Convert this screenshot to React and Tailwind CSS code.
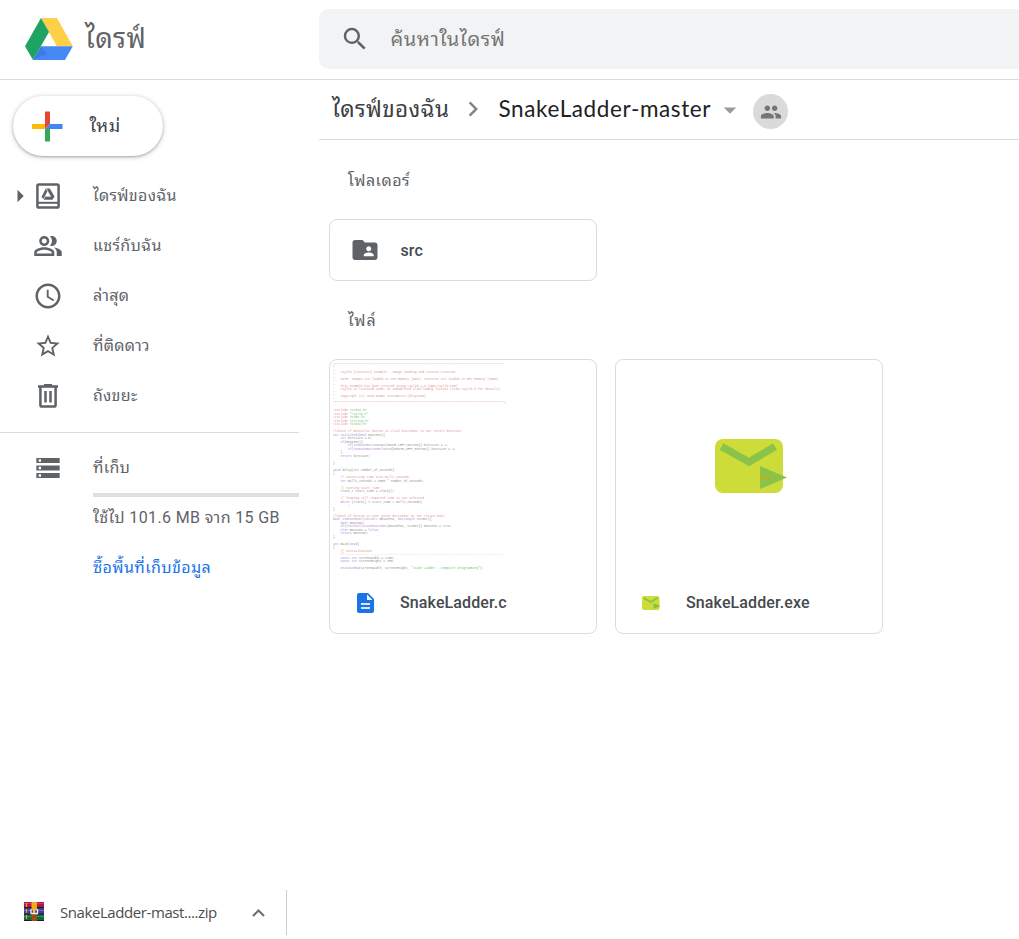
import React from "react";
import {
  MdSearch, MdChevronRight, MdArrowDropDown, MdPeople, MdOutlinePeopleAlt,
  MdAccessTime, MdStarBorder, MdStorage, MdFolderShared, MdArrowRight,
} from "react-icons/md";

const STARS = "*".repeat(91);
const R = "text-[#cf6f6f]", G = "text-[#3fae49]", B = "text-[#6a6ad8]", K = "text-[#666]", P = "text-[#9a5fb0]";

const CODE = [
  [[R, "/" + STARS]],
  [[R, "*"]],
  [[R, "*   raylib [textures] example - Image loading and texture creation"]],
  [[R, "*"]],
  [[R, "*   NOTE: Images are loaded in CPU memory (RAM); textures are loaded in GPU memory (VRAM)"]],
  [[R, "*"]],
  [[R, "*   This example has been created using raylib 1.3 (www.raylib.com)"]],
  [[R, "*   raylib is licensed under an unmodified zlib/libpng license (View raylib.h for details)"]],
  [[R, "*"]],
  [[R, "*   Copyright (c) 2015 Ramon Santamaria (@raysan5)"]],
  [[R, "*"]],
  [[R, STARS + "*/"]],
  [],
  [[R, "#include "], [G, "<stdio.h>"]],
  [[R, "#include "], [G, '"raylib.h"']],
  [[R, "#include "], [G, "<time.h>"]],
  [[R, "#include "], [G, "<string.h>"]],
  [[R, "#include "], [G, "<stdio.h>"]],
  [],
  [[R, "//Check if mouseclic button is click buttonbar is not return btnState"]],
  [[B, "int "], [P, "IsClicked("], [B, "bool "], [K, "mouseOn){"]],
  [[B, "    int "], [K, "btnState = 0;"]],
  [[B, "    if"], [K, "(mouseOn){"]],
  [[B, "        if("], [P, "IsMouseButtonDown"], [K, "(MOUSE_LEFT_BUTTON)) btnState = 1;"]],
  [[B, "        if("], [P, "IsMouseButtonReleased"], [K, "(MOUSE_LEFT_BUTTON)) btnState = 2;"]],
  [[K, "    }"]],
  [[B, "    return "], [K, "btnState;"]],
  [],
  [[K, "}"]],
  [],
  [[B, "void "], [K, "delay("], [B, "int "], [K, "number_of_seconds)"]],
  [[K, "{"]],
  [[R, "    // Converting time into milli_seconds"]],
  [[B, "    int "], [K, "milli_seconds = 1000 * number_of_seconds;"]],
  [],
  [[R, "    // Storing start time"]],
  [[K, "    clock_t start_time = clock();"]],
  [],
  [[R, "    // looping till required time is not achieved"]],
  [[B, "    while "], [K, "(clock() < start_time + milli_seconds)"]],
  [[K, "        ;"]],
  [[K, "}"]],
  [],
  [[R, "//Check if button is over given buttonbar or not return bool"]],
  [[B, "bool "], [P, "IsMouseOver(Vector2 "], [K, "mousePos, "], [P, "Rectangle "], [K, "srcRec){"]],
  [[B, "    bool "], [K, "mouseOn;"]],
  [[B, "    if"], [P, "(CheckCollisionPointRec"], [K, "(mousePos, srcRec)) mouseOn = "], [B, "true;"]],
  [[B, "    else "], [K, "mouseOn = "], [B, "false;"]],
  [[B, "    return "], [K, "mouseOn;"]],
  [[K, "}"]],
  [],
  [[B, "int "], [K, "main("], [B, "void"], [K, ")"]],
  [[K, "{"]],
  [[R, "    // Initialization"]],
  [[R, "    //" + "-".repeat(86)]],
  [[B, "    const int "], [K, "screenWidth = 1250;"]],
  [[B, "    const int "], [K, "screenHeight = 700;"]],
  [],
  [[P, "    InitWindow"], [K, "(screenWidth, screenHeight, "], [G, '"Snake Ladder - Computer programming"'], [K, ");"]],
];

function DriveLogo() {
  return (
    <svg className="h-[42px] w-[48px]" viewBox="0 0 48 42">
      <path d="M16 0h16l15.8 28.2h-16z" fill="#ffcf48" />
      <path d="M16 0l8 14L8 42 0 28.2z" fill="#1da362" />
      <path d="M8 42l8-13.8h31.8L40 42z" fill="#4688f4" />
      <path d="M8 42l8-13.8 6 7.5z" fill="#3b6fd9" opacity=".6" />
    </svg>
  );
}

function PlusIcon() {
  return (
    <svg className="size-[31px]" viewBox="0 0 31 31">
      <path d="M13 .5h5V13l-5 5z" fill="#ea4335" />
      <path d="M0 13h13v5H0z" fill="#fbbc04" />
      <path d="M13 18h5v12.500h-5z" fill="#34a853" />
      <path d="M18 13h12.500v5H13z" fill="#4285f4" />
    </svg>
  );
}

function MyDriveIcon() {
  return (
    <svg className="h-[26px] w-[24px]" viewBox="0 0 24 26" fill="none">
      <rect x="1.4" y="1.4" width="21.2" height="23.2" rx="1.6" stroke="#5f6368" strokeWidth="2.5" />
      <path d="M2 19.8h20" stroke="#5f6368" strokeWidth="2" />
      <path d="M9.8 5.5h4l4.7 8-2 3.3H8.2L5.5 14z" fill="#5f6368" />
      <path d="M11.4 8.3l2.8 4.8H9.1z" fill="#fff" />
      <path d="M10 5.3l4.6 8.1H9L7.3 17" stroke="#fff" strokeWidth=".7" />
    </svg>
  );
}

function TrashIcon() {
  return (
    <svg className="h-[24px] w-[20px]" viewBox="0 0 20 24" fill="none" stroke="#5f6368">
      <path d="M0 2.5h20" strokeWidth="2.6" />
      <path d="M6 1h8" strokeWidth="2" />
      <path d="M2.4 3v18q0 1.6 1.6 1.6h12q1.6 0 1.6-1.6V3" strokeWidth="2.5" />
      <path d="M7.5 7v11.5M12.5 7v11.5" strokeWidth="2.5" />
    </svg>
  );
}

function NavRow({ icon, label, arrow }) {
  return (
    <div className="flex h-[50px] items-center">
      <div className="flex w-[33px] justify-end">
        {arrow && <MdArrowRight className="mr-[-2px] size-[30px] shrink-0 text-[#5f6368]" />}
      </div>
      <div className="flex w-[30px] justify-center text-[#5f6368]">{icon}</div>
      <span className="ml-[30px] whitespace-nowrap text-[16px] leading-[24px] tracking-[0.3px] text-[#5f6368]">{label}</span>
    </div>
  );
}

function MailIcon({ className }) {
  return (
    <svg className={className} viewBox="0 0 72 54">
      <rect width="68" height="54" rx="8" fill="#cddc39" />
      <path d="M6.5 7.5L34 23 60 7.5" fill="none" stroke="#8bc34a" strokeWidth="7.5" />
      <path d="M45 27l27 11.5L45 50z" fill="#8bc34a" />
      <path d="M45 36l16 2.5L45 41z" fill="#afb42b" />
    </svg>
  );
}

function DocIcon() {
  return (
    <svg className="ml-px h-[20px] w-[17px]" viewBox="0 0 17 20">
      <path d="M2 0h9l6 6v12a2 2 0 0 1-2 2H2a2 2 0 0 1-2-2V2a2 2 0 0 1 2-2z" fill="#1a73e8" />
      <path d="M10 1.5V7h5.5z" fill="#fff" />
      <path d="M4 11h9M4 15h9" stroke="#d9e7fc" strokeWidth="1.8" />
    </svg>
  );
}

function ArchiveIcon() {
  return (
    <svg className="mb-[2px] h-[19px] w-[20px]" viewBox="0 0 20 19">
      <rect width="20" height="6" fill="#b3173f" />
      <rect y="1" width="20" height="1" fill="#d6336c" />
      <rect y="6" width="20" height="6" fill="#3f3d91" />
      <rect y="8" width="20" height="1" fill="#6d6bd0" />
      <rect y="12" width="20" height="7" fill="#13663a" />
      <rect y="14" width="20" height="1" fill="#259b57" />
      <path d="M0 5.5h20M0 12h20M0 18.5h20" stroke="#25152e" strokeWidth="1" />
      <path d="M2.5 1v4M2.5 7v4M2.5 13v4" stroke="#e8a21c" strokeWidth="1.2" />
      <rect x="7.5" y="11" width="5.5" height="8" fill="#9a4c17" />
      <rect x="7.5" width="5.5" height="8" fill="#f0a722" />
      <path d="M7 7v4.5h6.500V7" fill="none" stroke="#eee" strokeWidth="1.3" />
      <rect x="9" y="7" width="2.200" height="4" fill="#f7c544" />
    </svg>
  );
}

function Header() {
  return (
    <header className="flex h-[80px] shrink-0 border-b border-[#dadce0]">
      <div className="flex w-[319px] items-start pl-[25px] pt-[18px]">
        <DriveLogo />
        <span className="ml-[12px] mt-[1px] text-[27.5px] leading-[40px] tracking-[0.4px] text-[#5f6368]">ไดรฟ์</span>
      </div>
      <div className="mt-[9px] flex h-[60px] flex-1 items-center rounded-l-[10px] bg-[#f1f3f4] pl-[21px]">
        <MdSearch className="size-[30px] text-[#5f6368]" />
        <span className="ml-[20.500px] text-[20px] leading-[30px] tracking-[0.5px] text-[#757575]">ค้นหาในไดรฟ์</span>
      </div>
    </header>
  );
}

function Sidebar() {
  return (
    <aside className="w-[299px] shrink-0">
      <button className="ml-[13px] mt-[16px] flex h-[60px] w-[150px] items-center rounded-full bg-white pl-[19px] shadow-[0_1px_2px_0_rgba(60,64,67,0.3),0_1px_4px_1px_rgba(60,64,67,0.2)]">
        <PlusIcon />
        <span className="ml-[26.500px] text-[18px] leading-[26px] tracking-[0.5px] text-[#3c4043]">ใหม่</span>
      </button>
      <nav className="mt-[15px] flex flex-col">
        <NavRow arrow icon={<MyDriveIcon />} label="ไดรฟ์ของฉัน" />
        <NavRow icon={<MdOutlinePeopleAlt className="size-[30px]" />} label="แชร์กับฉัน" />
        <NavRow icon={<MdAccessTime className="size-[30px]" />} label="ล่าสุด" />
        <NavRow icon={<MdStarBorder className="size-[28px]" />} label="ที่ติดดาว" />
        <NavRow icon={<TrashIcon />} label="ถังขยะ" />
      </nav>
      <div className="mt-[11px] border-t border-[#dadce0] pt-[10px]">
        <NavRow icon={<MdStorage preserveAspectRatio="none" className="h-[30px] w-[28px]" />} label="ที่เก็บ" />
        <div className="ml-[93px] h-[4px] bg-[#e0e0e0]" />
        <p className="ml-[93px] mt-[9px] whitespace-nowrap text-[16px] leading-[24px] tracking-[0.37px] text-[#5f6368]">ใช้ไป 101.6 MB จาก 15 GB</p>
        <p className="ml-[93px] mt-[26px] whitespace-nowrap text-[16px] leading-[24px] tracking-[0.4px] text-[#1a73e8]">ซื้อพื้นที่เก็บข้อมูล</p>
      </div>
    </aside>
  );
}

function FileCard({ preview, icon, name }) {
  return (
    <div className="flex h-[275px] w-[268px] flex-col overflow-hidden rounded-[8px] border border-[#dadce0]">
      <div className="h-[212px] overflow-hidden">{preview}</div>
      <div className="flex flex-1 items-center pl-[26px]">
        <div className="flex w-[44px]">{icon}</div>
        <span className="text-[16px] font-medium leading-[24px] tracking-[0.12px] text-[#46494d]">{name}</span>
      </div>
    </div>
  );
}

function CodePreview() {
  return (
    <pre className="ml-[3px] mt-[3px] w-[1000px] origin-top-left scale-25 font-['Liberation_Mono',monospace] text-[12.4px] leading-[14.05px] opacity-75">
      {CODE.map((line, i) => (
        <div key={i} className="h-[14.05px]">
          {line.map(([color, text], j) => <span key={j} className={color}>{text}</span>)}
        </div>
      ))}
    </pre>
  );
}

function Main() {
  return (
    <main className="ml-[20px] flex-1">
      <div className="flex h-[60px] items-center border-b border-[#dadce0] pl-[13px]">
        <span className="mb-[1px] w-[116px] whitespace-nowrap text-[22.5px] leading-[34px] tracking-[0.35px] text-[#3c4043]">ไดรฟ์ของฉัน</span>
        <MdChevronRight className="mb-[1px] ml-[10px] size-[30px] text-[#80868b]" />
        <span className="mb-[2px] ml-[10.500px] w-[213px] whitespace-nowrap font-['Lato',sans-serif] text-[22.5px] leading-[34px] tracking-[0.62px] text-[#202124]">SnakeLadder-master</span>
        <MdArrowDropDown className="ml-[3px] size-[30px] text-[#999b9e]" />
        <div className="ml-[8.500px] mt-[3px] flex size-[35px] items-center justify-center rounded-full bg-[#dadada]">
          <MdPeople className="mt-[2px] size-[22px] text-[#757575]" />
        </div>
      </div>
      <h2 className="ml-[29px] mt-[29px] text-[16px] leading-[24px] tracking-[0.5px] text-[#5f6368]">โฟลเดอร์</h2>
      <div className="ml-[10px] mt-[26px] flex h-[62px] w-[268px] items-center rounded-[8px] border border-[#dadce0] pl-[20px]">
        <MdFolderShared className="size-[30px] text-[#5f6368]" />
        <span className="ml-[20.500px] mt-[1px] text-[16px] font-medium leading-[24px] tracking-[0.1px] text-[#46494d]">src</span>
      </div>
      <h2 className="ml-[29px] mt-[28px] text-[16px] leading-[24px] tracking-[0.9px] text-[#5f6368]">ไฟล์</h2>
      <div className="ml-[10px] mt-[26px] flex gap-[18px]">
        <FileCard preview={<CodePreview />} icon={<DocIcon />} name="SnakeLadder.c" />
        <FileCard
          preview={<MailIcon className="ml-[99px] mt-[79px] h-[54px] w-[72px]" />}
          icon={<MailIcon className="h-[14px] w-[18.5px]" />}
          name="SnakeLadder.exe"
        />
      </div>
    </main>
  );
}

export default function App() {
  return (
    <div className="flex h-[939px] w-[1019px] flex-col overflow-hidden bg-white font-['Roboto','Noto_Sans_Thai_Looped','Loma','Garuda','Waree','Tlwg_Typo','Noto_Sans_Thai',sans-serif]">
      <Header />
      <div className="flex min-h-0 flex-1">
        <Sidebar />
        <Main />
      </div>
      <footer className="mb-[4px] flex h-[45px] w-[287px] shrink-0 items-center border-r border-[#cacdd1] pl-[24px]">
        <ArchiveIcon />
        <span className="mb-[2px] ml-[16px] flex-1 whitespace-nowrap font-['Open_Sans',sans-serif] text-[15px] leading-[22px] tracking-[-0.42px] text-[#4a4d51]">SnakeLadder-mast....zip</span>
        <svg className="mr-[21px] h-[8px] w-[13px]" viewBox="0 0 13 8" fill="none" stroke="#6b6e72" strokeWidth="2">
          <path d="M1 7l5.5-5.5L12 7" />
        </svg>
      </footer>
    </div>
  );
}
